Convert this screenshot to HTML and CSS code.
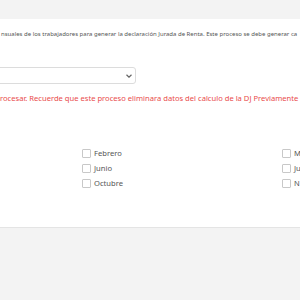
FILE: index.html
```html
<!DOCTYPE html>
<html lang="es">
<head>
<meta charset="utf-8">
<link rel="stylesheet" href="styles.css">
</head>
<body>
<div class="topbar"></div>
<main class="panel">
  <p class="intro">nsuales de los trabajadores para generar la declaración Jurada de Renta. Este proceso se debe generar ca</p>
  <div class="select">
    <span class="select-value"></span>
    <svg class="chev" width="6" height="4" viewBox="0 0 6 4"><path d="M0.5 0.8 L3 3.2 L5.5 0.8" fill="none" stroke="#666" stroke-width="1.2"/></svg>
  </div>
  <p class="warn">rocesar. Recuerde que este proceso eliminara datos del calculo de la DJ Previamente</p>
  <div class="months">
    <div class="col">
      <label class="chk"><span class="box"></span>Febrero</label>
      <label class="chk"><span class="box"></span>Junio</label>
      <label class="chk"><span class="box"></span>Octubre</label>
    </div>
    <div class="col">
      <label class="chk"><span class="box"></span>M</label>
      <label class="chk"><span class="box"></span>Ju</label>
      <label class="chk"><span class="box"></span>N</label>
    </div>
  </div>
</main>
<div class="footer"></div>
</body>
</html>
```
FILE: styles.css
```css
html, body {
  margin: 0;
  padding: 0;
  background: #f3f3f3;
  font-family: "Noto Sans", "DejaVu Sans", sans-serif;
  overflow: hidden;
}
.topbar {
  height: 19px;
  background: #f3f3f3;
}
.panel {
  background: #fff;
  height: 207px;
  border-bottom: 1px solid #e4e4e4;
  padding-top: 1px;
  overflow: hidden;
}
.intro {
  margin: 10px 0 0 1px;
  font-size: 6px;
  color: #555;
  white-space: nowrap;
  line-height: 8px;
}
.select {
  margin-top: 29px;
  margin-left: -10px;
  width: 146px;
  height: 17px;
  border: 1px solid #dcdcdc;
  border-radius: 3px;
  display: flex;
  align-items: center;
  justify-content: flex-end;
  padding-right: 3px;
  box-sizing: border-box;
}
.warn {
  margin: 9px 0 0 0;
  font-size: 7.6px;
  line-height: 10px;
  color: #e94b4b;
  white-space: nowrap;
}
.months {
  margin-top: 45px;
  margin-left: 82px;
  display: flex;
}
.col {
  width: 200px;
  flex: none;
  display: flex;
  flex-direction: column;
  gap: 5px;
}
.chk {
  display: flex;
  align-items: center;
  gap: 3px;
  height: 10px;
  font-size: 7.6px;
  color: #555;
  white-space: nowrap;
}
.box {
  width: 7px;
  height: 7px;
  border: 1px solid #c8c8c8;
  border-radius: 1px;
  background: #fff;
}
.footer {
  height: 73px;
  background: #f3f3f3;
}
```
